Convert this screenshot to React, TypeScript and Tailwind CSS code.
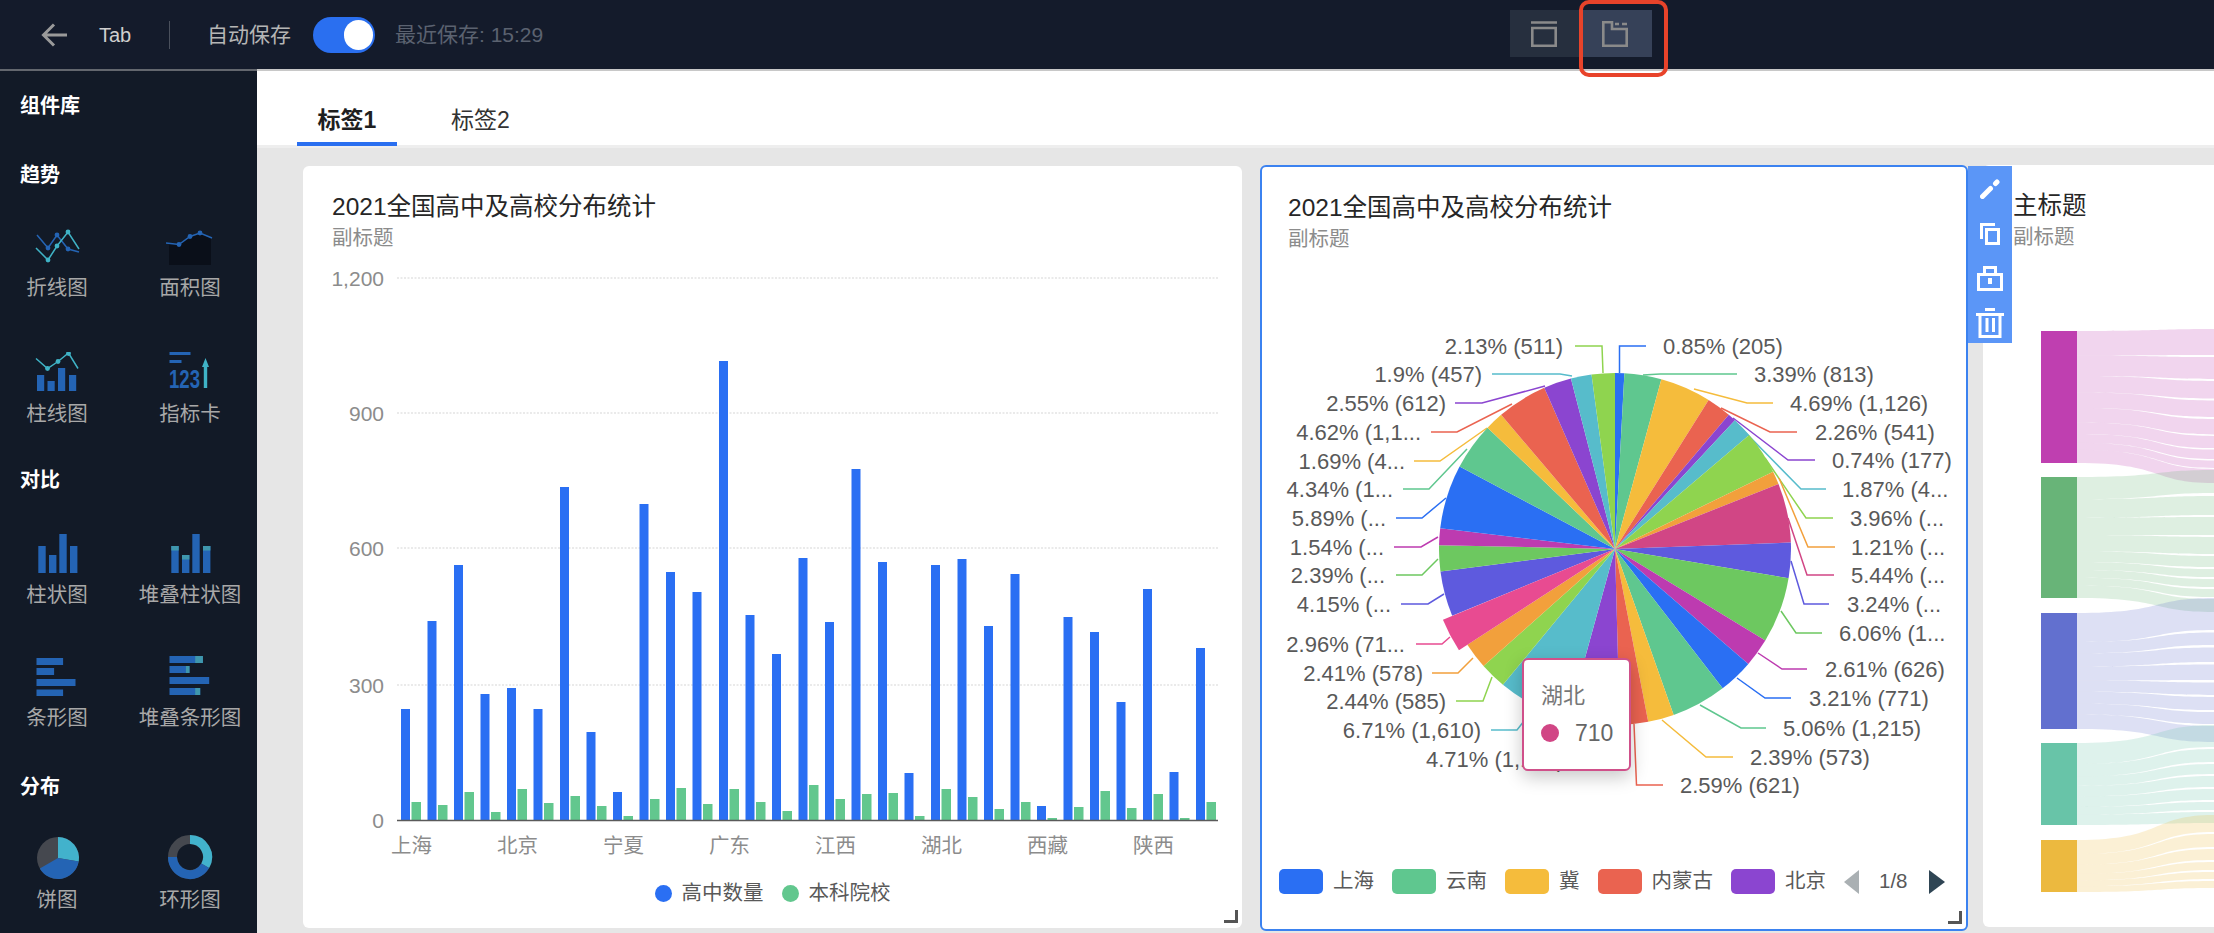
import React from 'react';

const palette = ['#2a6ff3', '#5fc78f', '#f5bc3c', '#ea6350', '#8b45d0', '#57bccb', '#8fd44f', '#f2a03c', '#d14685', '#5e5ade', '#6dc860', '#bd3bb0'];

const blueBars = [111, 199, 255, 126, 132, 111, 333, 88, 28, 316, 248, 228, 459, 205, 166, 262, 198, 351, 258, 47, 255, 261, 194, 246, 14, 203, 188, 118, 231, 48, 172];
const greenBars = [18, 15, 28, 8, 31, 17, 24, 14, 4, 21, 32, 16, 31, 18, 9, 35, 21, 26, 27, 4, 31, 23, 11, 18, 2, 13, 29, 12, 26, 2, 18];
const xLabels = ['上海', '北京', '宁夏', '广东', '江西', '湖北', '西藏', '陕西'];
const yTicks = [
  { label: '1,200', y: 278 },
  { label: '900', y: 413 },
  { label: '600', y: 548 },
  { label: '300', y: 685 },
  { label: '0', y: 820 },
];

// pct, label, anchor, text x, y, leader line
const slices: { pct: number; text: string; end?: boolean; x: number; y: number; line: string }[] = [
  { pct: 0.85, text: '0.85% (205)', x: 1663, y: 345, line: '1619.5,372 1619.5,345 1646,345' },
  { pct: 3.39, text: '3.39% (813)', x: 1754, y: 373, line: '1643,374 1660,373 1737,373' },
  { pct: 4.69, text: '4.69% (1,126)', x: 1790, y: 402, line: '1694,388 1747,402 1773,402' },
  { pct: 2.26, text: '2.26% (541)', x: 1815, y: 431, line: '1721,407 1770,431 1797,431' },
  { pct: 0.74, text: '0.74% (177)', x: 1832, y: 459, line: '1733,417 1788,459 1815,459' },
  { pct: 1.87, text: '1.87% (4...', x: 1842, y: 488, line: '1742,428 1801,488 1826,488' },
  { pct: 3.96, text: '3.96% (...', x: 1850, y: 517, line: '1765,457 1806,517 1833,517' },
  { pct: 1.21, text: '1.21% (...', x: 1851, y: 546, line: '1779,477 1808,546 1835,546' },
  { pct: 5.44, text: '5.44% (...', x: 1851, y: 574, line: '1788,517 1807,574 1834,574' },
  { pct: 3.24, text: '3.24% (...', x: 1847, y: 603, line: '1791,560 1804,603 1829,603' },
  { pct: 6.06, text: '6.06% (1...', x: 1839, y: 632, line: '1781,610 1796,632 1822,632' },
  { pct: 2.61, text: '2.61% (626)', x: 1825, y: 668, line: '1758,652 1782,668 1807,668' },
  { pct: 3.21, text: '3.21% (771)', x: 1809, y: 697, line: '1737,677 1765,697 1791,697' },
  { pct: 5.06, text: '5.06% (1,215)', x: 1783, y: 727, line: '1700,704 1741,727 1766,727' },
  { pct: 2.39, text: '2.39% (573)', x: 1750, y: 756, line: '1662,719 1706,756 1733,756' },
  { pct: 2.59, text: '2.59% (621)', x: 1680, y: 784, line: '1634,723 1636.5,784 1663,784' },
  { pct: 4.71, text: '4.71% (1,130)', x: 1426, y: 758, line: '1590,724 1590,758 1580,758' },
  { pct: 6.71, text: '6.71% (1,610)', end: true, x: 1481, y: 729, line: '1524,720 1517,729 1491,729' },
  { pct: 2.44, text: '2.44% (585)', end: true, x: 1446, y: 700, line: '1492,676 1483,700 1456,700' },
  { pct: 2.41, text: '2.41% (578)', end: true, x: 1423, y: 672, line: '1473,657 1458,672 1432,672' },
  { pct: 2.96, text: '2.96% (71...', end: true, x: 1405, y: 643, line: '1450,636 1442,643 1416,643' },
  { pct: 4.15, text: '4.15% (...', end: true, x: 1391, y: 603, line: '1444,593 1428,603 1401,603' },
  { pct: 2.39, text: '2.39% (...', end: true, x: 1385, y: 574, line: '1438,558 1422,574 1396,574' },
  { pct: 1.54, text: '1.54% (...', end: true, x: 1384, y: 546, line: '1438,536 1421,546 1394,546' },
  { pct: 5.89, text: '5.89% (...', end: true, x: 1386, y: 517, line: '1446,497 1422,517 1396,517' },
  { pct: 4.34, text: '4.34% (1...', end: true, x: 1393, y: 488, line: '1467,448 1429,488 1403,488' },
  { pct: 1.69, text: '1.69% (4...', end: true, x: 1405, y: 460, line: '1487,427 1440,460 1414,460' },
  { pct: 4.62, text: '4.62% (1,1...', end: true, x: 1421, y: 431, line: '1512,403 1457,431 1431,431' },
  { pct: 2.55, text: '2.55% (612)', end: true, x: 1446, y: 402, line: '1545,385 1482,402 1455,402' },
  { pct: 1.9, text: '1.9% (457)', end: true, x: 1482, y: 373, line: '1572,375 1560,373 1492,373' },
  { pct: 2.13, text: '2.13% (511)', end: true, x: 1563, y: 345, line: '1603,372 1602,345 1575,345' },
];

const cx = 1615;
const cy = 548;

const arc = (from: number, to: number, r: number) => {
  const a0 = (from / 100) * Math.PI * 2;
  const a1 = (to / 100) * Math.PI * 2;
  const x0 = cx + r * Math.sin(a0);
  const y0 = cy - r * Math.cos(a0);
  const x1 = cx + r * Math.sin(a1);
  const y1 = cy - r * Math.cos(a1);
  return `M${cx} ${cy}L${x0} ${y0}A${r} ${r} 0 0 1 ${x1} ${y1}Z`;
};

// right edge of each flow is page y at the clip line
const sankeyNodes = [
  { color: '#bf3fb0', top: 331, bottom: 463, right: [[329, 355], [357, 379], [381, 398.5], [400.5, 417], [419, 434.5], [436, 448], [449.5, 459], [460.5, 468], [469, 483]] },
  { color: '#68b478', top: 477, bottom: 598, right: [[470, 493], [496, 515], [517, 535], [537, 554], [556, 567], [569, 577], [579, 587], [589, 597], [599, 612]] },
  { color: '#6270cf', top: 613, bottom: 729, right: [[598, 630], [632.5, 645], [647.5, 662], [664.5, 680], [682.5, 695], [697, 710], [712, 724], [726, 742]] },
  { color: '#68c4a8', top: 743, bottom: 825, right: [[725, 747], [749, 762], [764, 774], [776, 787], [789, 800], [802, 810], [812, 823]] },
  { color: '#ecb93f', top: 840, bottom: 892, right: [[815, 832], [834, 847], [849, 860], [862, 870], [872, 879], [881, 888]] },
];

const iconBlue = '#2464b4';
const iconTeal = '#3fb3c6';

const LineIcon = () => (
  <svg width="48" height="40" viewBox="0 0 48 40" fill="none" strokeWidth="1.5">
    <polyline points="4,9 15,22 24,9 35,23 46,26" stroke={iconBlue} />
    <polyline points="3,22 15,34 24,20 35,6 46,23" stroke={iconTeal} />
    {[[15, 22], [24, 9], [35, 23]].map(([x, y]) => <circle key={x} cx={x} cy={y} r="2.4" fill={iconBlue} />)}
    {[[15, 34], [24, 20], [35, 6]].map(([x, y]) => <circle key={x} cx={x} cy={y} r="2.4" fill={iconTeal} />)}
  </svg>
);

const AreaIcon = () => (
  <svg width="48" height="40" viewBox="0 0 48 40" fill="none">
    <path d="M3 17L13 18.5L24 10.5L34 7L45 12V39H3Z" fill="#0a0f19" />
    <polyline points="0,17 13,18.5 24,10.5 34,7 46,12" stroke={iconBlue} strokeWidth="1.5" />
    {[[13, 18.5], [24, 10.5], [34, 7]].map(([x, y]) => <circle key={x} cx={x} cy={y} r="2.4" fill={iconBlue} />)}
  </svg>
);

const ComboIcon = () => (
  <svg width="48" height="40" viewBox="0 0 48 40" fill="none">
    {[[4, 23], [14.5, 29], [25, 16], [36, 23]].map(([x, y]) => <rect key={x} x={x} y={y} width="7.2" height={39 - y} fill={iconBlue} />)}
    <polyline points="3,6.5 14.5,16.5 25,9.5 35.5,1 45,16.5" stroke={iconTeal} strokeWidth="1.5" />
    {[[14.5, 16.5], [25, 9.5], [35.5, 1.5]].map(([x, y]) => <circle key={x} cx={x} cy={y} r="2.4" fill={iconTeal} />)}
  </svg>
);

const KpiIcon = () => (
  <svg width="48" height="40" viewBox="0 0 48 40" fill="none">
    <rect x="3.5" y="0" width="21" height="3" fill={iconBlue} />
    <rect x="3.5" y="8" width="12" height="3" fill={iconBlue} />
    <text x="3" y="36" textLength="31" lengthAdjust="spacingAndGlyphs" className="fill-[#2464b4] text-[25px] font-bold">123</text>
    <path d="M36 15L39.5 6L43 15H41.2V36H37.8V15Z" fill={iconTeal} />
  </svg>
);

const ColumnIcon = ({ stacked }: { stacked?: boolean }) => (
  <svg width="48" height="40" viewBox="0 0 48 40" fill="none">
    {[[5.3, 13], [16, 22], [26.3, 1], [37, 13]].map(([x, y]) => (
      <g key={x}>
        <rect x={x} y={y} width="7.4" height={40 - y} fill={iconBlue} />
        {stacked && y !== 1 && <rect x={x} y={y} width="7.4" height="4.5" fill="#3f97ad" />}
      </g>
    ))}
  </svg>
);

const BarIcon = ({ stacked }: { stacked?: boolean }) => {
  const rows = stacked
    ? [[0, 33.4, 25.7], [10, 20, 16.4], [21, 39.7, 0], [32, 30.7, 25.7]]
    : [[2, 26.6, 0], [12, 17.6, 0], [23, 39, 0], [33.5, 26.6, 0]];
  return (
    <svg width="48" height="40" viewBox="0 0 48 40" fill="none">
      {rows.map(([y, w, split]) => (
        <g key={y}>
          <rect x="3.5" y={y} width={w} height="7" fill={iconBlue} />
          {split > 0 && <rect x={3.5 + split} y={y} width={w - split} height="7" fill="#3f97ad" />}
        </g>
      ))}
    </svg>
  );
};

const PieIcon = () => (
  <svg width="48" height="40" viewBox="0 0 48 40" fill="none" className="overflow-visible">
    <circle cx="25" cy="20" r="21" fill="#45484f" />
    <path d="M25 20L25 -1A21 21 0 0 1 45.7 23.6Z" fill="#42b2cc" />
    <path d="M25 20L45.7 23.6A21 21 0 0 1 6.8 30.5Z" fill="#2464b4" />
  </svg>
);

const DonutIcon = () => (
  <svg width="48" height="40" viewBox="0 0 48 40" fill="none" className="overflow-visible">
    <circle cx="24" cy="19" r="17.5" stroke="#45484f" strokeWidth="9" />
    <path d="M24 1.5A17.5 17.5 0 0 1 39.2 27.8" stroke="#42b2cc" strokeWidth="9" />
    <path d="M39.2 27.8A17.5 17.5 0 0 1 6.5 19" stroke="#2464b4" strokeWidth="9" />
  </svg>
);

const ChartItem = ({ icon, label }: { icon: React.ReactNode; label: string }) => (
  <div className="flex flex-col items-center">
    <div className="h-10 w-12">{icon}</div>
    <div className="mt-2 h-7 text-[20.5px] leading-7 whitespace-nowrap text-[#a8a8a8]">{label}</div>
  </div>
);

const SectionTitle = ({ children, className }: { children: React.ReactNode; className: string }) => (
  <div className={`pl-5 h-7 text-[20px] leading-7 font-bold text-white ${className}`}>{children}</div>
);

const Sidebar = () => (
  <aside className="w-[257px] shrink-0 overflow-hidden bg-[#121a27] border-t-2 border-[#63676e]">
    <SectionTitle className="mt-[21px]">组件库</SectionTitle>
    <SectionTitle className="mt-[41px]">趋势</SectionTitle>
    <div className="grid w-[266px] grid-cols-[114px_152px] gap-y-[50px] mt-[37px]">
      <ChartItem icon={<LineIcon />} label="折线图" />
      <ChartItem icon={<AreaIcon />} label="面积图" />
      <ChartItem icon={<ComboIcon />} label="柱线图" />
      <ChartItem icon={<KpiIcon />} label="指标卡" />
    </div>
    <SectionTitle className="mt-[38px]">对比</SectionTitle>
    <div className="grid w-[266px] grid-cols-[114px_152px] gap-y-[47px] mt-[39px]">
      <ChartItem icon={<ColumnIcon />} label="柱状图" />
      <ChartItem icon={<ColumnIcon stacked />} label="堆叠柱状图" />
      <ChartItem icon={<BarIcon />} label="条形图" />
      <ChartItem icon={<BarIcon stacked />} label="堆叠条形图" />
    </div>
    <SectionTitle className="mt-[41px]">分布</SectionTitle>
    <div className="grid w-[266px] grid-cols-[114px_152px] mt-[37px]">
      <ChartItem icon={<PieIcon />} label="饼图" />
      <ChartItem icon={<DonutIcon />} label="环形图" />
    </div>
  </aside>
);

const Header = () => (
  <header className="flex h-[69px] shrink-0 items-center bg-[#141b2b]">
    <svg width="26" height="24" viewBox="0 0 26 24" fill="none" stroke="#9a9a9a" strokeWidth="3" className="ml-[41px]">
      <path d="M26 12H3M13 1.5L2.5 12L13 22.5" />
    </svg>
    <span className="ml-8 w-[34px] text-[20px] text-[#cfcfcf]">Tab</span>
    <div className="ml-9 h-7 w-px bg-[#4a505c]" />
    <span className="ml-[37px] w-[84px] text-[21px] text-[#b5b5b5]">自动保存</span>
    <div className="ml-[22px] flex h-9 w-[62px] items-center justify-end rounded-full bg-[#2a6ff0] pr-[2px]">
      <div className="h-[30px] w-[29px] rounded-full bg-white" />
    </div>
    <span className="ml-5 w-[149px] text-[21px] whitespace-nowrap text-[#5b6270]">最近保存: 15:29</span>
    <div className="ml-[966px] flex h-[47px] -translate-y-px">
      <div className="flex w-[73px] items-center bg-[#262f3e] pl-[21px]">
        <svg width="26" height="26" viewBox="0 0 26 26" fill="none" stroke="#8a8a8a" strokeWidth="2.6">
          <path d="M0 1.5H26M1.3 7H24.7V24.7H1.3Z" />
        </svg>
      </div>
      <div className="flex w-[69px] items-center bg-[#364158] pl-[19px]">
        <svg width="26" height="26" viewBox="0 0 26 26" fill="none" stroke="#8a8a8a" strokeWidth="2.6">
          <path d="M1.3 1.3V24.7H24.7V8H10V1.3Z" />
          <path d="M13 3H17M20 3H25" />
        </svg>
      </div>
    </div>
  </header>
);

const CardHeader = ({ title, left }: { title: string; left: string }) => (
  <div className={`h-[84px] pt-[25px] ${left}`}>
    <div className="h-8 text-[24.5px] leading-8 whitespace-nowrap text-[#262626]">{title}</div>
    <div className="mt-px h-7 text-[20.5px] leading-7 text-[#8c8c8c]">副标题</div>
  </div>
);

const ResizeHandle = () => (
  <div className="absolute right-[4px] bottom-[5px] h-[13px] w-[14px] border-r-[3px] border-b-[3px] border-[#555]" />
);

const BarCard = () => (
  <div className="relative h-[762px] w-[939px] shrink-0 rounded-md bg-white">
    <CardHeader title="2021全国高中及高校分布统计" left="pl-[29px]" />
    <svg width="939" height="625" viewBox="303 250 939 625" className="block">
      {yTicks.map((t) => (
        <g key={t.label}>
          {t.y !== 820 && <line x1="397" x2="1218" y1={t.y} y2={t.y} stroke="#e4e4e4" strokeWidth="1.5" strokeDasharray="2 1.5" />}
          <text x="384" y={t.y} textAnchor="end" dominantBaseline="central" className="fill-[#8c8c8c] text-[21px]">{t.label}</text>
        </g>
      ))}
      {blueBars.map((h, i) => (
        <g key={i}>
          <rect x={401 + i * 26.5} y={820 - h} width="9" height={h} fill="#2a6ff3" />
          <rect x={411.5 + i * 26.5} y={820 - greenBars[i]} width="9.5" height={greenBars[i]} fill="#62c78e" />
        </g>
      ))}
      <line x1="397" x2="1218" y1="820.5" y2="820.5" stroke="#5a5a5a" strokeWidth="1.5" />
      {xLabels.map((label, i) => (
        <text key={label} x={411.5 + i * 106} y="845" textAnchor="middle" dominantBaseline="central" className="fill-[#8c8c8c] text-[20.5px]">{label}</text>
      ))}
    </svg>
    <div className="mt-1 flex h-7 items-center justify-center text-[20.5px] text-[#595959]">
      <span className="h-[17px] w-[17px] rounded-full bg-[#2a6ff3]" />
      <span className="ml-[10px]">高中数量</span>
      <span className="ml-[18px] h-[17px] w-[17px] rounded-full bg-[#62c78e]" />
      <span className="ml-[10px]">本科院校</span>
    </div>
    <ResizeHandle />
  </div>
);

const PieChart = () => {
  let acc = 0;
  const parts = slices.map((s, i) => {
    const from = acc;
    acc += s.pct;
    return { ...s, from, to: acc, color: palette[i % 12], active: i === 20 };
  });
  return (
    <svg width="704" height="610" viewBox="1262 250 704 610" className="block">
      {parts.map((p) => (
        <polyline key={p.text + p.x} points={p.line} fill="none" stroke={p.active ? '#e84b91' : p.color} strokeWidth="1.5" />
      ))}
      {parts.filter((p) => !p.active).map((p) => (
        <path key={p.from} d={arc(p.from, p.to, 176)} fill={p.color} />
      ))}
      {parts.filter((p) => p.active).map((p) => (
        <path key={p.from} d={arc(p.from, p.to, 186)} fill="#e84b91" />
      ))}
      {parts.map((p) => (
        <text key={p.text + p.y} x={p.x} y={p.y} textAnchor={p.end ? 'end' : 'start'} dominantBaseline="central" className="fill-[#595959] text-[22px]">{p.text}</text>
      ))}
    </svg>
  );
};

const legendItems = [
  { name: '上海', color: 'bg-[#2a6ff3]' },
  { name: '云南', color: 'bg-[#5fc78f]' },
  { name: '冀', color: 'bg-[#f5bc3c]' },
  { name: '内蒙古', color: 'bg-[#ea6350]' },
  { name: '北京', color: 'bg-[#8b45d0]' },
];

const PieCard = () => (
  <div className="relative -mt-px ml-[18px] h-[766px] w-[708px] shrink-0 rounded-md border-2 border-[#3b82f0] bg-white">
    <CardHeader title="2021全国高中及高校分布统计" left="pl-[26px]" />
    <PieChart />
    <div className="mt-2 flex h-[25px] items-center pl-[17px] text-[20.5px] text-[#595959]">
      {legendItems.map((item) => (
        <div key={item.name} className="mr-[18px] flex items-center gap-[10px]">
          <span className={`h-[25px] w-11 rounded-[5px] ${item.color}`} />
          <span>{item.name}</span>
        </div>
      ))}
      <span className="h-0 w-0 border-y-[12px] border-r-[15px] border-y-transparent border-r-[#aab0b3]" />
      <span className="ml-5">1/8</span>
      <span className="ml-[21px] h-0 w-0 border-y-[12px] border-l-[16px] border-y-transparent border-l-[#2f4554]" />
    </div>
    <ResizeHandle />
    {/* tooltip */}
    <div className="absolute top-[491px] left-[260px] h-[113px] w-[109px] rounded-md border-2 border-[#d0508a] bg-white shadow-[0_6px_18px_rgba(0,0,0,0.22)]">
      <div className="mt-[22px] ml-[17px] text-[22px] leading-7 text-[#777]">湖北</div>
      <div className="mt-[9px] ml-[17px] flex items-center gap-[16px] text-[23px] leading-7 text-[#666]">
        <span className="h-[18px] w-[18px] rounded-full bg-[#d14685]" />
        <span>710</span>
      </div>
    </div>
    {/* card toolbar */}
    <div className="absolute top-[-1px] left-[calc(100%+2px)] z-10 flex h-[177px] w-[44px] flex-col items-center bg-[#5b96f7] pt-[13px]">
      <svg width="20" height="20" viewBox="0 0 20 20" fill="none" stroke="#fff" strokeWidth="5" strokeLinecap="round">
        <path d="M2.5 17.5L10.5 9.5M15.5 4.5L17 3" />
      </svg>
      <svg width="20" height="22" viewBox="0 0 20 22" fill="none" stroke="#fff" strokeWidth="3" className="mt-[24px]">
        <path d="M1.5 16V1.5H15" />
        <rect x="6.5" y="6.5" width="12" height="14" />
      </svg>
      <svg width="26" height="25" viewBox="0 0 26 25" fill="#fff" className="mt-[21px]">
        <path d="M6 7V0H20V7H26V25H0V7ZM9 7H17V3H9ZM3 10V22H23V10ZM11 12H15V18H11Z" fillRule="evenodd" />
      </svg>
      <svg width="28" height="30" viewBox="0 0 28 30" fill="none" stroke="#fff" strokeWidth="3" className="mt-[17px]">
        <path d="M9 1.5H19M0 6.5H28M4 7V28.5H24V7M11 10V24M17.5 10V24" />
      </svg>
    </div>
  </div>
);

const SankeyCard = () => (
  <div className="ml-[15px] h-[762px] w-[900px] shrink-0 -translate-y-px rounded-md bg-white">
    <div className="h-[85px] pl-[30px] pt-[25px]">
      <div className="h-8 text-[24.5px] leading-8 text-[#262626]">主标题</div>
      <div className="mt-px h-7 text-[20.5px] leading-7 text-[#8c8c8c]">副标题</div>
    </div>
    <svg width="231" height="677" viewBox="1983 250 231 677" className="block">
      {sankeyNodes.map((node) => {
        const total = node.right.reduce((sum, [a, b]) => sum + (b - a), 0);
        const scale = (node.bottom - node.top) / total;
        let y1 = node.top;
        return (
          <g key={node.color}>
            {node.right.map(([a, b], i) => {
              const y0 = y1;
              y1 = y0 + (b - a) * scale;
              return (
                <path
                  key={i}
                  d={`M2077 ${y0}C2165 ${y0} 2150 ${a} 2214 ${a}V${b}C2150 ${b} 2165 ${y1} 2077 ${y1}Z`}
                  fill={node.color}
                  fillOpacity="0.22"
                />
              );
            })}
            <rect x="2041" y={node.top} width="36" height={node.bottom - node.top} fill={node.color} />
          </g>
        );
      })}
    </svg>
  </div>
);

export default function App() {
  return (
    <div className="relative flex h-[933px] w-[2214px] flex-col overflow-hidden bg-white font-['Liberation_Sans','Noto_Sans_CJK_SC',sans-serif]">
      <Header />
      <div className="flex min-h-0 flex-1">
        <Sidebar />
        <main className="flex min-w-0 flex-1 flex-col">
          <div className="flex h-[79px] shrink-0 items-end border-t-2 border-b-[3px] border-t-[#c8c8c8] border-b-[#eeeeee] pl-10 text-[23px] leading-[30px] text-[#333]">
            <div className="-mb-px flex h-[75px] w-[100px] items-end justify-center border-b-4 border-[#2a6ff0] pb-[7px] font-semibold text-[#1f1f1f]">标签1</div>
            <div className="-mb-px ml-[54px] flex h-[75px] items-end border-b-4 border-transparent pb-[7px]">标签2</div>
          </div>
          <div className="flex flex-1 overflow-hidden bg-[#e6e6e6] pt-[18px] pl-[46px]">
            <BarCard />
            <PieCard />
            <SankeyCard />
          </div>
        </main>
      </div>
      {/* red annotation round the active layout button */}
      <div className="absolute top-0 left-[1579px] z-20 h-[77px] w-[89px] rounded-[10px] border-4 border-[#e8432a]" />
    </div>
  );
}
